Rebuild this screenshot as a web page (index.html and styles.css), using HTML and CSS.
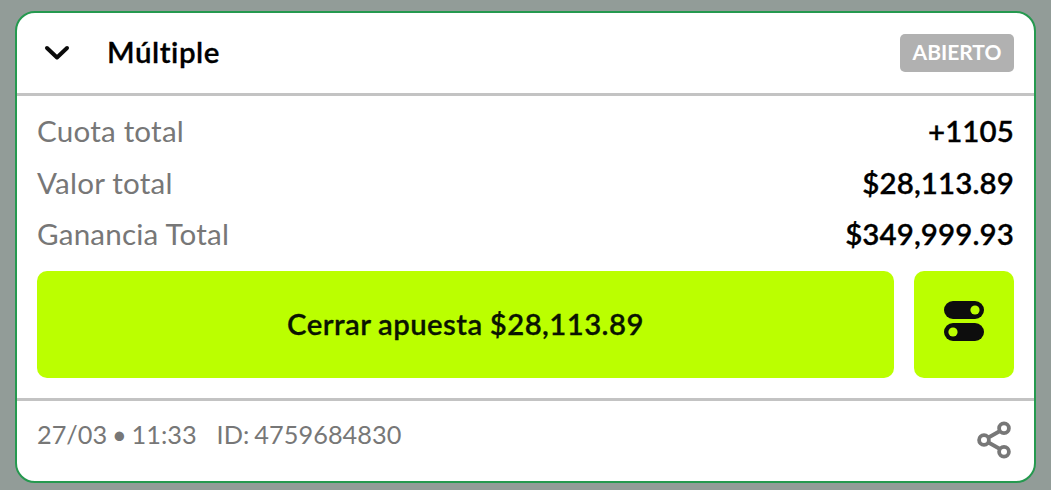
FILE: index.html
```html
<!DOCTYPE html>
<html lang="es">
<head>
    <meta charset="UTF-8" />
    <meta name="viewport" content="width=device-width, initial-scale=1.0" />
    <title>Mis apuestas</title>
    <link rel="stylesheet" href="styles.css">
</head>
<body>
    <div class="bet-card">
        <div class="bet-header">
            <svg class="chevron" width="26" height="16" viewBox="0 0 26 16">
                <path d="M3 3 L13 12.5 L23 3" />
            </svg>
            <h3>Múltiple</h3>
            <span class="status">ABIERTO</span>
        </div>

        <div class="bet-body">
            <div class="row">
                <span class="label">Cuota total</span>
                <span class="value">+1105</span>
            </div>
            <div class="row">
                <span class="label">Valor total</span>
                <span class="value">$28,113.89</span>
            </div>
            <div class="row">
                <span class="label">Ganancia Total</span>
                <span class="value">$349,999.93</span>
            </div>
            <div class="actions">
                <button class="cashout">Cerrar apuesta $28,113.89</button>
                <button class="settings" aria-label="Opciones">
                    <svg width="40" height="40" viewBox="0 0 40 40">
                        <rect x="0" y="0" width="40" height="18" rx="9" fill="#0d0d0d" />
                        <circle cx="31" cy="9" r="4.6" fill="#bbff00" />
                        <rect x="0" y="22" width="40" height="18" rx="9" fill="#0d0d0d" />
                        <circle cx="9" cy="31" r="4.6" fill="#bbff00" />
                    </svg>
                </button>
            </div>
        </div>

        <div class="bet-footer">
            <span class="date">27/03 • 11:33</span>
            <span class="bet-id">ID: 4759684830</span>
            <svg class="share" width="37" height="38" viewBox="0 0 37 38">
                <path d="M11.5 16.5 L23 10 M11.5 21.5 L23 28" />
                <circle cx="7" cy="19" r="4.9" />
                <circle cx="27" cy="7.3" r="4.9" />
                <circle cx="27" cy="30.7" r="4.9" />
            </svg>
        </div>
    </div>
</body>
</html>
```
FILE: styles.css
```css
* {
    box-sizing: border-box;
}
body {
    margin: 0;
    padding: 11px 15px 7px;
    height: 490px;
    background: #929c98;
    font-family: Lato, "Liberation Sans", sans-serif;
    font-variant-ligatures: none;
    overflow: hidden;
}
.bet-card {
    height: 472px;
    display: flex;
    flex-direction: column;
    background: #fff;
    border: 2px solid #25994f;
    border-radius: 20px;
}
.bet-header {
    height: 83px;
    display: flex;
    align-items: center;
    padding: 0 20px;
    border-bottom: 3px solid #c3c3c3;
}
.chevron {
    margin-left: 7px;
    fill: none;
    stroke: #0a0a0a;
    stroke-width: 4;
    stroke-linecap: round;
    stroke-linejoin: round;
}
h3 {
    margin: 0 0 4px 37px;
    font-size: 29.5px;
    font-weight: 600;
    letter-spacing: 0.55px;
    color: #000;
    -webkit-text-stroke: 0.3px #000;
}
.status {
    margin-left: auto;
    width: 114px;
    height: 38px;
    line-height: 36px;
    text-align: center;
    border-radius: 5px;
    background: #b1b1b1;
    color: #fff;
    font-size: 21px;
    font-weight: 700;
}
.bet-body {
    height: 305px;
    padding: 9px 20px 0;
    border-bottom: 3px solid #c3c3c3;
}
.row {
    height: 51.5px;
    display: flex;
    align-items: center;
    justify-content: space-between;
    font-size: 29.6px;
}
.label {
    color: #777;
    letter-spacing: 0.2px;
}
.value {
    color: #000;
    font-size: 29.5px;
    font-weight: 600;
    letter-spacing: 0.1px;
    -webkit-text-stroke: 0.3px #000;
}
.actions {
    display: flex;
    gap: 20px;
    margin-top: 11px;
}
button {
    height: 107px;
    padding: 0;
    border: none;
    border-radius: 10px;
    background: #bbff00;
    color: #0a1400;
    font-family: inherit;
}
.cashout {
    flex: 1;
    padding-bottom: 1px;
    font-size: 29.3px;
    font-weight: 600;
    letter-spacing: 0.45px;
    word-spacing: -0.6px;
    -webkit-text-stroke: 0.3px #0a1400;
}
.settings {
    width: 100px;
    display: flex;
    align-items: center;
    justify-content: center;
    padding-bottom: 7px;
}
.bet-footer {
    display: flex;
    padding: 17px 20px 0;
    color: #777;
    font-size: 25.3px;
    line-height: 32px;
    word-spacing: -1.6px;
}
.bet-id {
    margin-left: 20px;
    letter-spacing: 0.05px;
}
.share {
    margin: 3px 0 0 auto;
    fill: none;
    stroke: #777;
    stroke-width: 3.8;
}
```
